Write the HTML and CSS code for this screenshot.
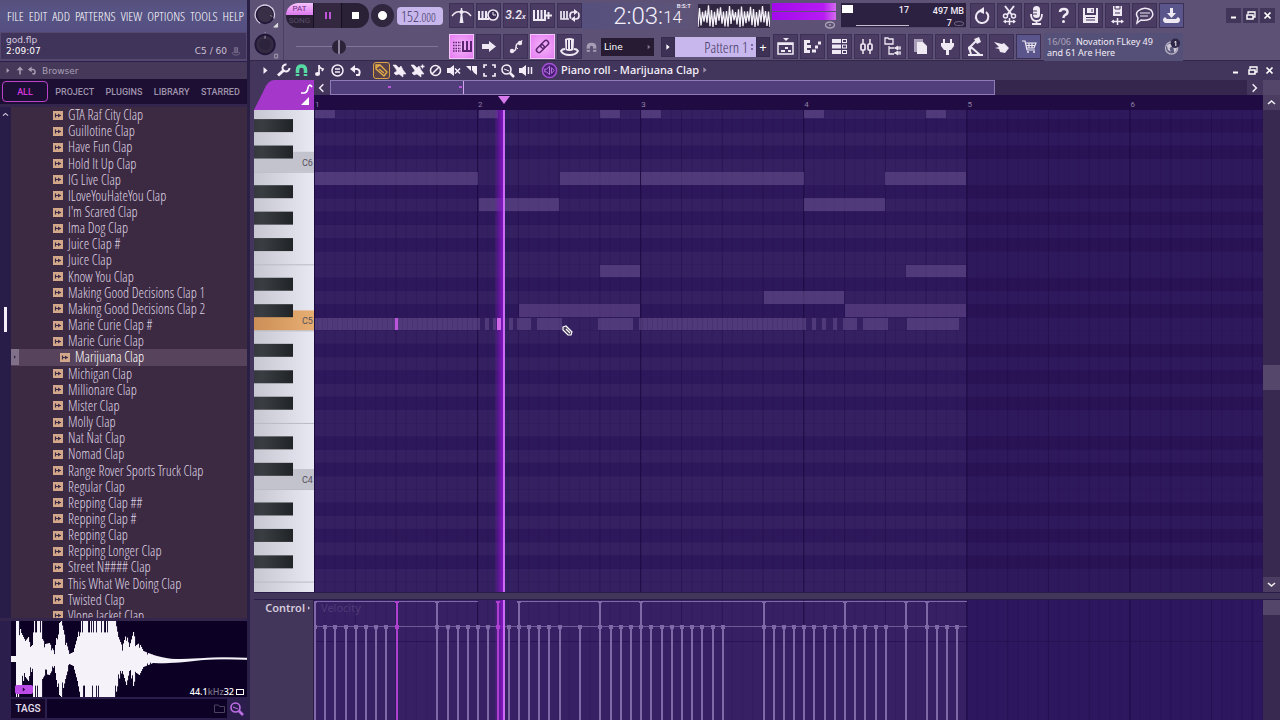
FILE: index.html
```html
<!DOCTYPE html>
<html lang="en">
<head>
<meta charset="utf-8">
<title>god.flp - Piano roll</title>
<link rel="stylesheet" href="styles.css">
</head>
<body>
<svg class="sprite" aria-hidden="true">
  <symbol id="metro" viewBox="0 0 25 25"><path d="M3 13Q7 8 11 9M14 9Q18 8 22 13M12.500 5V20" fill="none" stroke="currentColor" stroke-width="1.500"/><path d="M12.500 7l2 13h-4z" fill="currentColor"/><circle cx="12.500" cy="9" r="2" fill="currentColor"/></symbol>
  <symbol id="wait" viewBox="0 0 25 25"><path d="M3 8v8h10M6.500 8v8M10 8v8" fill="none" stroke="currentColor" stroke-width="2"/><circle cx="17" cy="12" r="5" fill="#3a2b52" stroke="currentColor" stroke-width="1.700"/><path d="M17 9v3h3" fill="none" stroke="currentColor"/></symbol>
  <symbol id="addkeys" viewBox="0 0 25 25"><path d="M4 7v10h11V7M8 7v9M11.500 7v9" fill="none" stroke="currentColor" stroke-width="2"/><path d="M15 12.500h7M18.500 9v7" stroke="currentColor" stroke-width="2"/></symbol>
  <symbol id="loop" viewBox="0 0 25 25"><path d="M4 8v8h8M7 8v8M10 8v8" fill="none" stroke="currentColor" stroke-width="1.700"/><path d="M20 9h-4q-3 0-3 3.500 0 2 1 3M15 16h4q3 0 3-3.500 0-2-1-3" fill="none" stroke="currentColor" stroke-width="1.700"/><path d="M17 6l4 3-4 3zM18 13l-4 3 4 3z" fill="currentColor"/></symbol>
  <symbol id="typing" viewBox="0 0 25 25"><path d="M4 8.500h8M4 11.500h8M4 14.500h8M4 17h8" stroke="currentColor" stroke-width="1.500" stroke-dasharray="1.500 1"/><path d="M14 7v10h8V7M18 7v10" fill="none" stroke="currentColor" stroke-width="2"/></symbol>
  <symbol id="arrow" viewBox="0 0 25 25"><path d="M6 10h7V7l7 5.500-7 5.500v-3H6z" fill="currentColor"/></symbol>
  <symbol id="slide" viewBox="0 0 25 25"><path d="M9 17h1q3 0 3-4t4-4" fill="none" stroke="currentColor" stroke-width="1.500"/><circle cx="9" cy="17" r="2.200" fill="currentColor"/><circle cx="17" cy="9" r="2.200" fill="currentColor"/><path d="M18 9l1-3M13 13l2 2" stroke="currentColor"/></symbol>
  <symbol id="link" viewBox="0 0 25 25"><g transform="rotate(-45 12.500 12.500)" fill="none" stroke="currentColor" stroke-width="1.500"><rect x="5" y="10" width="9" height="5" rx="2.500"/><rect x="11" y="10" width="9" height="5" rx="2.500"/></g></symbol>
  <symbol id="hat" viewBox="0 0 25 25"><path d="M8 5q4.500-2 9 0l-.5 11q-4 2-8 0z" fill="currentColor"/><path d="M8 15q-3 0-4 2 2 4 8.500 4t8.500-4q-1-2-4-2" fill="none" stroke="currentColor" stroke-width="1.800"/><path d="M10.500 6v9M13.500 6v9" stroke="#45345f"/></symbol>
  <symbol id="magnet" viewBox="0 0 25 25"><path d="M5 20v-8q0-6 7.500-6t7.500 6v8h-5v-7q0-2.500-2.500-2.500T10 13v7z" fill="currentColor"/><path d="M5 16h5M15 16h5" stroke="#463658" stroke-width="1.500"/></symbol>
  <symbol id="playlist" viewBox="0 0 25 25"><path d="M10 4h6l-3 3z" fill="currentColor"/><rect x="5" y="9" width="15" height="11" fill="none" stroke="currentColor" stroke-width="1.500"/><path d="M5 10h15M8 17h4M12 14h3M15 17h3" stroke="currentColor" stroke-width="2"/></symbol>
  <symbol id="pianoroll" viewBox="0 0 25 25"><path d="M4 6h6v3H7v2h4v3H7v2h3v3H4z" fill="currentColor"/><path d="M12 17h4M15 13h3M18 9h3" stroke="currentColor" stroke-width="3"/></symbol>
  <symbol id="rack" viewBox="0 0 25 25"><path d="M5 7h9M5 12.500h9M5 18h9" stroke="currentColor" stroke-width="4"/><g fill="none" stroke="currentColor"><rect x="15.500" y="5.500" width="4" height="3"/><rect x="15.500" y="11" width="4" height="3"/><rect x="15.500" y="16.500" width="4" height="3"/></g></symbol>
  <symbol id="mixer" viewBox="0 0 25 25"><path d="M9 5v15M16 5v15" stroke="currentColor" stroke-width="1.500"/><g fill="#41315c" stroke="currentColor" stroke-width="1.700"><rect x="7" y="10" width="4" height="6" rx="1"/><rect x="14" y="10" width="4" height="6" rx="1"/></g></symbol>
  <symbol id="tree" viewBox="0 0 25 25"><path d="M4 4h3l1 1h4v5H4zM8 12v8h5M8 14h5" fill="none" stroke="currentColor" stroke-width="1.300"/><path d="M13 14h7M13 19h7" stroke="currentColor"/><path d="M14 14l3-2v4zM14 19l3-2v4zM19 12v4M19 17v4" fill="currentColor" stroke="currentColor"/></symbol>
  <symbol id="pages" viewBox="0 0 25 25"><path d="M6 5h9v13H6z" fill="#aa9fb9"/><path d="M9 8h6l4 4v8H9z" fill="currentColor"/></symbol>
  <symbol id="plug" viewBox="0 0 25 25"><path d="M8 5h2v4h5V5h2v4h2v3l-3 4h-2v5h-3v-5H9l-3-4V9h2z" fill="currentColor"/></symbol>
  <symbol id="lamp" viewBox="0 0 25 25"><path d="M6 21h15M9 20l-2-6 7-7M9 13l9 8" fill="none" stroke="currentColor" stroke-width="2"/><path d="M12 5l5-2 2 5-4 2z" fill="currentColor"/><circle cx="8" cy="14" r="2" fill="currentColor"/></symbol>
  <symbol id="hand" viewBox="0 0 25 25"><path d="M5 8l8 2 2-1 5 5-4 5-5-1-1-3-4-1 4-1z" fill="currentColor"/></symbol>
  <symbol id="cart" viewBox="0 0 25 25"><path d="M6 7h3l2 9h8M9 9h11l-2 5h-8M10 11.500h9M13 9v5M16 9v5" fill="none" stroke="currentColor" stroke-width="1.200"/><circle cx="12" cy="18" r="1" fill="currentColor"/><circle cx="18" cy="18" r="1" fill="currentColor"/></symbol>
  <symbol id="redo" viewBox="0 0 25 25"><path d="M10 8a6.200 6.200 0 1 0 6 1" fill="none" stroke="currentColor" stroke-width="2"/><path d="M8 8l6-4v7z" fill="currentColor"/></symbol>
  <symbol id="cut" viewBox="0 0 25 25"><path d="M8 3l7 9M17 3l-7 9" stroke="currentColor" stroke-width="2"/><circle cx="8.500" cy="13" r="2" fill="none" stroke="currentColor" stroke-width="1.500"/><circle cx="16.500" cy="13" r="2" fill="none" stroke="currentColor" stroke-width="1.500"/><path d="M7 18.500h11M12.500 15v7" stroke="currentColor" stroke-width="1.500"/><path d="M6 18.500l3-2v4zM19 18.500l-3-2v4z" fill="currentColor"/></symbol>
  <symbol id="mic" viewBox="0 0 25 25"><rect x="9" y="3" width="7" height="12" rx="3.500" fill="currentColor"/><path d="M7 11q0 7 5.500 7T18 11M12.500 18v4M8 21h9" fill="none" stroke="currentColor" stroke-width="1.800"/><path d="M9 8h4M9 11h4" stroke="#45345f"/></symbol>
  <symbol id="help" viewBox="0 0 25 25"><path d="M9 9q0-3 4-3 3.500 0 3.500 3 0 2-2.500 3-1.500 1-1.500 3" fill="none" stroke="currentColor" stroke-width="2.500"/><circle cx="12.500" cy="18.500" r="1.500" fill="currentColor"/></symbol>
  <symbol id="save" viewBox="0 0 25 25"><path d="M5 5h2v7h11V5h2v15H5z" fill="currentColor"/><path d="M9 5h7v5H9z" fill="currentColor"/><path d="M14 6v3M8 14.500h9M8 17h9" stroke="#45345f"/></symbol>
  <symbol id="saveas" viewBox="0 0 25 25"><path d="M8 3h9v10H8z" fill="currentColor"/><path d="M10 3v3h5V3M10 10h5" fill="none" stroke="#45345f"/><path d="M7 18.500h11M12.500 15v7" stroke="currentColor" stroke-width="1.500"/><path d="M6 18.500l3-2v4zM19 18.500l-3-2v4z" fill="currentColor"/></symbol>
  <symbol id="chat" viewBox="0 0 25 25"><path d="M9 17l-4 3 1-5Q3 11 6 8q6-5 13-1 4 5-1 9-4 2-9 1z" fill="none" stroke="currentColor" stroke-width="1.500"/><path d="M8 10h10M8 13h8" stroke="currentColor"/></symbol>
  <symbol id="download" viewBox="0 0 25 25"><path d="M11 5h3v5h3l-4.500 5L8 10h3z" fill="currentColor"/><path d="M6 14l-2 2q0 4 3 4h11q3 0 3-4l-2-2-2 2H8z" fill="currentColor"/></symbol>
  <symbol id="min" viewBox="0 0 15 15"><path d="M5 9.500h5" stroke="currentColor" stroke-width="2"/></symbol>
  <symbol id="restore" viewBox="0 0 15 15"><path d="M5 6V4h7v5h-2" fill="none" stroke="currentColor" stroke-width="1.300"/><path d="M4 7h6v4H4z" fill="none" stroke="currentColor" stroke-width="1.500"/></symbol>
  <symbol id="close" viewBox="0 0 15 15"><path d="M4.500 4.500l6 6M10.500 4.500l-6 6" stroke="currentColor" stroke-width="1.700"/></symbol>
  <symbol id="play" viewBox="0 0 15 15"><path d="M5.500 4l4 3.500-4 3.500z" fill="currentColor"/></symbol>
  <symbol id="wrench" viewBox="0 0 15 15"><path d="M2 12.500l6-5.500" stroke="currentColor" stroke-width="3"/><path d="M13.500 5a3.500 3.500 0 1 1-3-3.500" fill="none" stroke="currentColor" stroke-width="2"/></symbol>
  <symbol id="horseshoe" viewBox="0 0 15 15"><path d="M3.500 13V7q0-4 4-4t4 4v6" fill="none" stroke="currentColor" stroke-width="3.500"/><path d="M1 10.500h5M9 10.500h5" stroke="#43365c"/></symbol>
  <symbol id="note" viewBox="0 0 15 15"><path d="M7 11V2q0 3 4 4-1 2-1 2" fill="none" stroke="currentColor" stroke-width="1.700"/><ellipse cx="5.500" cy="11" rx="2.500" ry="2" fill="currentColor"/></symbol>
  <symbol id="menu" viewBox="0 0 15 15"><circle cx="7.500" cy="7.500" r="5.500" fill="none" stroke="currentColor" stroke-width="1.500"/><path d="M5 6h5M5 9h5" stroke="currentColor" stroke-width="1.300"/></symbol>
  <symbol id="undo" viewBox="0 0 15 15"><path d="M5 6h4q4 1 2 6H8" fill="none" stroke="currentColor" stroke-width="2"/><path d="M2 6l5-4v8z" fill="currentColor"/></symbol>
  <symbol id="pencil" viewBox="0 0 15 15"><path d="M2 2h4l7 7-3 4-8-7zM2 5l4-3M5 6l5 4" fill="none" stroke="currentColor" stroke-width="1.400"/></symbol>
  <symbol id="brush" viewBox="0 0 15 15"><path d="M1 2l3 0 3 3 2-2 2 4 3 4-3 0 0 3-4-3-3 1-2-2 3-2-1-2z" fill="currentColor" stroke="currentColor" stroke-width=".6"/></symbol>
  <symbol id="brush2" viewBox="0 0 15 15"><path d="M1 2l3 0 3 3 2-2 2 4 3 4-3 0 0 3-4-3-3 1-2-2 3-2-1-2z" fill="currentColor" stroke="currentColor" stroke-width=".6"/><path d="M10.500 3.500h4M12.500 1.500v4" stroke="currentColor" stroke-width="1.300"/></symbol>
  <symbol id="no" viewBox="0 0 15 15"><circle cx="7.500" cy="7.500" r="5" fill="none" stroke="currentColor" stroke-width="1.600"/><path d="M4 11l7-7" stroke="currentColor" stroke-width="1.600"/></symbol>
  <symbol id="mute" viewBox="0 0 15 15"><path d="M1 5h3l4-3v11l-4-3H1z" fill="currentColor"/><path d="M9 5.500l5 5M14 5.500l-5 5" stroke="currentColor" stroke-width="1.500"/></symbol>
  <symbol id="slice" viewBox="0 0 15 15"><path d="M2 3h5v5zM8 3h5v9q-3-1-5-5z" fill="currentColor"/></symbol>
  <symbol id="select" viewBox="0 0 15 15"><path d="M2 5V2h3M10 2h3v3M13 10v3h-3M5 13H2v-3" fill="none" stroke="currentColor" stroke-width="1.700"/></symbol>
  <symbol id="zoom" viewBox="0 0 15 15"><circle cx="6.500" cy="6.500" r="4.500" fill="none" stroke="currentColor" stroke-width="1.600"/><path d="M4 6l5 2" stroke="currentColor"/><path d="M10 10l4 4" stroke="currentColor" stroke-width="2.500"/></symbol>
  <symbol id="audition" viewBox="0 0 15 15"><path d="M1 5h3l4-3v11l-4-3H1z" fill="currentColor"/><path d="M10.500 4v7M13.500 4v7" stroke="currentColor" stroke-width="1.500"/></symbol>
  <symbol id="up" viewBox="0 0 15 15"><path d="M7.500 13V5" stroke="currentColor" stroke-width="2"/><path d="M3 7l4.500-5L12 7z" fill="currentColor"/></symbol>
  <symbol id="left" viewBox="0 0 15 15"><path d="M9.500 3.500l-4 4 4 4" fill="none" stroke="currentColor" stroke-width="1.600"/></symbol>
  <symbol id="right" viewBox="0 0 15 15"><path d="M5.500 3.500l4 4-4 4" fill="none" stroke="currentColor" stroke-width="1.600"/></symbol>
  <symbol id="chevup" viewBox="0 0 15 15"><path d="M4 9l3.500-3L11 9" fill="none" stroke="currentColor" stroke-width="1.600"/></symbol>
  <symbol id="chevdown" viewBox="0 0 15 15"><path d="M4 6l3.500 3L11 6" fill="none" stroke="currentColor" stroke-width="1.600"/></symbol>
  <symbol id="sample" viewBox="0 0 10 9"><path d="M0 0h10v9H0z" fill="#d2a78a"/><path d="M2.500 2.500v4M3 4.500h5" stroke="#3c2a48" stroke-width="1.200"/><path d="M5 2.500l3 2-3 2z" fill="#3c2a48"/></symbol>
  <symbol id="folder" viewBox="0 0 15 15"><path d="M2.500 4h4l1 1.500h5v6h-10z" fill="none" stroke="currentColor"/></symbol>
</svg>

<div class="app">
  <aside class="side">
    <nav class="menubar">
      <button>FILE</button><button>EDIT</button><button>ADD</button><button>PATTERNS</button><button>VIEW</button><button>OPTIONS</button><button>TOOLS</button><button>HELP</button>
    </nav>
    <div class="hint">
      <div>god.flp</div>
      <div class="hint-row"><b>2:09:07</b><span>C5 / 60</span><svg class="ic"><use href="#hat"/></svg></div>
    </div>
    <div class="browser-head"><svg><use href="#play"/></svg><svg><use href="#up"/></svg><svg><use href="#undo"/></svg><span>Browser</span></div>
    <div class="tabs"><button class="tab on">ALL</button><button class="tab">PROJECT</button><button class="tab">PLUGINS</button><button class="tab">LIBRARY</button><button class="tab">STARRED</button></div>
    <div class="browser">
      <div class="gutter"><svg class="gutter-up"><use href="#chevup"/></svg><span class="gutter-thumb"></span></div>
      <div class="files">
        <ul>
          <li><svg><use href="#sample"/></svg>GTA Raf City Clap</li>
          <li><svg><use href="#sample"/></svg>Guillotine Clap</li>
          <li><svg><use href="#sample"/></svg>Have Fun Clap</li>
          <li><svg><use href="#sample"/></svg>Hold It Up Clap</li>
          <li><svg><use href="#sample"/></svg>IG Live Clap</li>
          <li><svg><use href="#sample"/></svg>ILoveYouHateYou Clap</li>
          <li><svg><use href="#sample"/></svg>I'm Scared Clap</li>
          <li><svg><use href="#sample"/></svg>Ima Dog Clap</li>
          <li><svg><use href="#sample"/></svg>Juice Clap #</li>
          <li><svg><use href="#sample"/></svg>Juice Clap</li>
          <li><svg><use href="#sample"/></svg>Know You Clap</li>
          <li><svg><use href="#sample"/></svg>Making Good Decisions Clap 1</li>
          <li><svg><use href="#sample"/></svg>Making Good Decisions Clap 2</li>
          <li><svg><use href="#sample"/></svg>Marie Curie Clap #</li>
          <li><svg><use href="#sample"/></svg>Marie Curie Clap</li>
          <li class="sel"><span class="mark"><svg><use href="#play"/></svg></span><svg><use href="#sample"/></svg>Marijuana Clap</li>
          <li><svg><use href="#sample"/></svg>Michigan Clap</li>
          <li><svg><use href="#sample"/></svg>Millionare Clap</li>
          <li><svg><use href="#sample"/></svg>Mister Clap</li>
          <li><svg><use href="#sample"/></svg>Molly Clap</li>
          <li><svg><use href="#sample"/></svg>Nat Nat Clap</li>
          <li><svg><use href="#sample"/></svg>Nomad Clap</li>
          <li><svg><use href="#sample"/></svg>Range Rover Sports Truck Clap</li>
          <li><svg><use href="#sample"/></svg>Regular Clap</li>
          <li><svg><use href="#sample"/></svg>Repping Clap ##</li>
          <li><svg><use href="#sample"/></svg>Repping Clap #</li>
          <li><svg><use href="#sample"/></svg>Repping Clap</li>
          <li><svg><use href="#sample"/></svg>Repping Longer Clap</li>
          <li><svg><use href="#sample"/></svg>Street N#### Clap</li>
          <li><svg><use href="#sample"/></svg>This What We Doing Clap</li>
          <li><svg><use href="#sample"/></svg>Twisted Clap</li>
          <li><svg><use href="#sample"/></svg>Vlone Jacket Clap</li>
        </ul>
      </div>
    </div>
    <div class="preview">
      <svg id="sampleWave" viewBox="0 0 236 76" preserveAspectRatio="none"></svg>
      <button class="preview-play" aria-label="Preview"><svg><use href="#play"/></svg></button>
      <div class="preview-info">44.1<span>kHz</span>32<i></i></div>
    </div>
    <div class="tags"><label for="tag">TAGS</label><div class="tagbox"><input id="tag" type="text"><svg><use href="#folder"/></svg></div><button aria-label="Search"><svg><use href="#zoom"/></svg></button></div>
  </aside>

  <main class="main">
    <header class="toolbar">
      <div class="knobs">
        <svg viewBox="0 0 33 31"><circle cx="15" cy="15" r="9" fill="#393047" stroke="#201638" stroke-width="2"/><path d="M10 24a10 10 0 1 1 14-5" fill="none" stroke="#d8d0e3" stroke-width="1.300"/><path d="M21 16l1 1M28 28v-4l-4 4z" stroke="#ddd" fill="#ddd"/></svg>
        <svg viewBox="0 0 33 31"><circle cx="15" cy="15" r="10" fill="#342b43" stroke="#201638" stroke-width="2"/><circle cx="15" cy="15" r="6" fill="#2c233c"/><path d="M15 6v3M15 2v1M28 29v-4h-3v4z" stroke="#aaa1b4" fill="none"/></svg>
      </div>
      <div class="bars">
        <div class="bar">
          <div class="transport">
            <div class="mode"><button class="pat">PAT</button><button class="song">SONG</button></div>
            <button class="pause" aria-label="Pause"><i></i><i></i></button>
            <button class="stop" aria-label="Stop"><i></i></button>
          </div>
          <button class="rec" aria-label="Record"></button>
          <div class="tempo">152<small>.000</small></div>
          <div class="btns">
            <button aria-label="Metronome"><svg><use href="#metro"/></svg></button><button aria-label="Wait for input"><svg><use href="#wait"/></svg></button><button class="count">3.2<small>x</small></button><button aria-label="Overdub"><svg><use href="#addkeys"/></svg></button><button aria-label="Loop record"><svg><use href="#loop"/></svg></button>
          </div>
          <div class="clock"><span>2:03:</span><span class="clock-end"><sup>B:S:T</sup>14</span></div>
          <svg class="scope" id="scope" viewBox="0 0 72 24" preserveAspectRatio="none"></svg>
          <div class="meter"><i></i><i></i><svg viewBox="0 0 12 8"><ellipse cx="6" cy="4" rx="4.500" ry="3" fill="none" stroke="#aaa2b5" stroke-width="1.300"/><circle cx="6" cy="4" r="1" fill="#aaa2b5"/></svg></div>
          <div class="cpu"><i class="cpu-load"></i><span class="cpu-num">17</span><span class="cpu-mem">497 MB<br>7 <i></i></span></div>
          <div class="btns">
            <button aria-label="Undo"><svg><use href="#redo"/></svg></button><button aria-label="Cut"><svg><use href="#cut"/></svg></button><button aria-label="Record audio"><svg><use href="#mic"/></svg></button><button aria-label="Help"><svg><use href="#help"/></svg></button><button aria-label="Save"><svg><use href="#save"/></svg></button><button aria-label="Save as"><svg><use href="#saveas"/></svg></button><button aria-label="Chat"><svg><use href="#chat"/></svg></button><button class="blue" aria-label="Download"><svg><use href="#download"/></svg></button>
          </div>
          <div class="win"><button aria-label="Minimize"><svg><use href="#min"/></svg></button><button aria-label="Restore"><svg><use href="#restore"/></svg></button><button aria-label="Close"><svg><use href="#close"/></svg></button></div>
        </div>
        <div class="bar">
          <input class="shift" type="range" min="0" max="100" value="28" aria-label="Song position">
          <div class="btns">
            <button class="on" aria-label="Typing keyboard"><svg><use href="#typing"/></svg></button><button aria-label="Step"><svg><use href="#arrow"/></svg></button><button aria-label="Slide"><svg><use href="#slide"/></svg></button><button class="on" aria-label="Link"><svg><use href="#link"/></svg></button><button aria-label="Hat"><svg><use href="#hat"/></svg></button>
          </div>
          <svg class="snap-ic"><use href="#magnet"/></svg>
          <div class="snap"><select aria-label="Snap"><option>Line</option></select><svg><use href="#play"/></svg></div>
          <div class="pattern"><button aria-label="Pattern menu"><svg><use href="#play"/></svg></button><div class="pattern-name">Pattern 1<i></i></div><button>+</button></div>
          <div class="btns">
            <button aria-label="Playlist"><svg><use href="#playlist"/></svg></button><button aria-label="Piano roll"><svg><use href="#pianoroll"/></svg></button><button aria-label="Channel rack"><svg><use href="#rack"/></svg></button><button aria-label="Mixer"><svg><use href="#mixer"/></svg></button><button aria-label="Browser"><svg><use href="#tree"/></svg></button><button aria-label="Projects"><svg><use href="#pages"/></svg></button><button aria-label="Plugins"><svg><use href="#plug"/></svg></button><button aria-label="Tempo tapper"><svg><use href="#lamp"/></svg></button><button aria-label="Touch"><svg><use href="#hand"/></svg></button><button class="blue" aria-label="Shop"><svg><use href="#cart"/></svg></button>
          </div>
          <div class="news"><div><p><time>16/06</time><span>Novation FLkey 49</span></p><p>and 61 Are Here</p></div><svg viewBox="0 0 18 20"><circle cx="8" cy="11" r="6.500" fill="#5b587d" stroke="#b8b2c4" stroke-width="1.300"/><path d="M3 8l4-2 2 3-3 2 1 4-3-2zM10 11l4-1-1 4-2 2z" fill="#cdc6d6"/><circle cx="12" cy="6" r="5" fill="#2f2648"/><path d="M11 5l1.500-1v5" fill="none" stroke="#fff"/></svg></div>
        </div>
      </div>
    </header>

    <section class="roll">
      <div class="titlebar">
        <div class="tools">
          <button aria-label="Menu"><svg><use href="#play"/></svg></button><button aria-label="Tools"><svg><use href="#wrench"/></svg></button><button class="green" aria-label="Snap"><svg><use href="#horseshoe"/></svg></button><button aria-label="Stamp"><svg><use href="#note"/></svg></button><button aria-label="View"><svg><use href="#menu"/></svg></button><button aria-label="Undo"><svg><use href="#undo"/></svg></button>
        </div>
        <div class="tools edit">
          <button class="active" aria-label="Draw"><svg><use href="#pencil"/></svg></button><button aria-label="Paint"><svg><use href="#brush"/></svg></button><button aria-label="Paint sequence"><svg><use href="#brush2"/></svg></button><button aria-label="Delete"><svg><use href="#no"/></svg></button><button aria-label="Mute"><svg><use href="#mute"/></svg></button><button aria-label="Slice"><svg><use href="#slice"/></svg></button><button aria-label="Select"><svg><use href="#select"/></svg></button><button aria-label="Zoom"><svg><use href="#zoom"/></svg></button><button aria-label="Playback"><svg><use href="#audition"/></svg></button>
        </div>
        <svg class="speaker" viewBox="0 0 18 18"><circle cx="9" cy="9" r="7.500" fill="#4a1f76" stroke="#a850d8" stroke-width="1.600"/><path d="M4 7.500h2l3-3v9l-3-3H4zM11 6l3 3-3 3z" fill="none" stroke="#c07be8"/></svg>
        <h1>Piano roll - Marijuana Clap</h1><svg class="dim"><use href="#play"/></svg>
        <div class="win flat"><button aria-label="Minimize"><svg><use href="#min"/></svg></button><button aria-label="Restore"><svg><use href="#restore"/></svg></button><button aria-label="Close"><svg><use href="#close"/></svg></button></div>
      </div>
      <div class="body">
        <div class="corner"><svg viewBox="0 0 60 30"><path d="M0 30L10 10Q14 0 20 0h40v30z" fill="#a538cb"/><path d="M47 13h3q3 0 4-5t4-1" fill="none" stroke="#fff" stroke-width="1.700"/><path d="M47 25h8v-8z" fill="#fff"/></svg></div>
        <div class="overview"><button aria-label="Scroll left"><svg><use href="#left"/></svg></button><div class="track"><div class="range"><svg id="mini"></svg></div></div><button aria-label="Scroll right"><svg><use href="#right"/></svg></button></div>
        <div class="ov-end"></div>
        <div class="ruler"><svg id="ruler"></svg></div>
        <button class="vbtn" aria-label="Scroll up"><svg><use href="#chevup"/></svg></button>
        <svg class="keys" id="keys"></svg>
        <svg class="grid" id="grid"></svg>
        <div class="vscroll"><span></span><button aria-label="Scroll down"><svg><use href="#chevdown"/></svg></button></div>
        <div class="split"></div>
        <div class="control"><span>Control</span><svg><use href="#play"/></svg></div>
        <svg class="grid" id="velocity"></svg>
        <div class="vscroll low"><b></b></div>
      </div>
    </section>
  </main>
</div>
<script src="draw.js"></script>
</body>
</html>
```

FILE: styles.css
```css
* { box-sizing: border-box; }
body { margin: 0; background: #382b50; color: #d6cde0; font: 11px/14px "Noto Sans", "Open Sans", sans-serif; }
button, input, select { font: inherit; color: inherit; background: none; border: 0; padding: 0; margin: 0; }
button { display: block; }
svg { display: block; }
.sprite { position: absolute; width: 0; height: 0; }
.app { display: grid; grid-template-columns: 250px minmax(0, 1fr); height: 100vh; overflow: hidden; }
.menubar, .files ul, .tempo, .pattern-name { font-family: "Open Sans Condensed Light", "Noto Sans Condensed", "Roboto Condensed", "DejaVu Sans Condensed", sans-serif; }

/* sidebar */
.side { display: flex; flex-direction: column; min-height: 0; background: #2b1e4c; border-right: 3px solid #2a1f45; }
.menubar { display: flex; align-items: center; justify-content: space-between; height: 32px; padding: 0 3px 0 7px; background: linear-gradient(#57507c, #575486 40%, #564f81); color: #fff; font-size: 13px; }
.hint { height: 29px; margin-bottom: 1px; padding: 1px 4px 0 5px; background: #41345a; border: 1px solid #554870; border-width: 1px 1px 2px 1px; font: 9px/11px "DejaVu Sans", sans-serif; }
.hint div { height: 11px; line-height: 13px; }
.hint-row { display: flex; gap: 3px; color: #c9c0d4; }
.hint-row b { margin-right: auto; color: #fff; font-weight: 400; }
.hint-row svg { width: 12px; height: 12px; opacity: .4; }
.browser-head { display: flex; align-items: center; height: 17px; padding-left: 2px; background: #453859; color: #a99fb5; font: 9px "DejaVu Sans", sans-serif; }
.browser-head svg { width: 12px; height: 11px; }
.browser-head span { margin-left: 4px; }
.tabs { display: flex; gap: 3px; height: 25px; padding: 2px 3px 2px 2px; background: #1d0f33; }
.tab { flex: 1 1 auto; color: #9f93ac; font: 500 9px Roboto, sans-serif; }
.tab.on { flex: 0 0 46px; color: #d535dd; border: 1px solid #bb43c7; border-radius: 4px; }
.browser { display: flex; flex: 1; min-height: 0; padding: 3px 0; background: #34254c; }
.gutter { display: flex; flex-direction: column; align-items: center; width: 11px; background: #281c48; }
.gutter-up { width: 11px; height: 15px; }
.gutter-thumb { width: 3px; height: 25px; margin-top: 185px; background: #f4effa; }
.files { flex: 1; overflow: hidden; background: #3c2a43; }
.files ul { display: flex; flex-direction: column; height: calc(100% + 6px); margin: 0; padding: 0; list-style: none; font-size: 14px; line-height: 16px; color: #dfd3e2; }
.files li { display: flex; flex: 1; align-items: center; gap: 5px; min-height: 0; padding-left: 42px; white-space: nowrap; }
.files li > svg { width: 10px; height: 9px; }
.files .sel { padding-left: 0; background: #57445c; color: #fff; }
.mark { width: 8px; height: 16px; margin-right: 36px; background: #81708a; color: #3d2c4a; }
.mark svg { width: 8px; height: 16px; }
.preview { position: relative; height: 76px; margin-left: 11px; background: #0c0024; }
.preview > svg { width: 100%; height: 100%; }
.preview-play { position: absolute; left: 4px; bottom: 3px; width: 18px; height: 9px; border-radius: 2px; background: #bd4bea; color: #1a0530; }
.preview-play svg { width: 18px; height: 9px; }
.preview-info { position: absolute; right: 3px; bottom: 0; display: flex; align-items: center; color: #fff; font: 500 9px/10px "Noto Sans", sans-serif; }
.preview-info span { color: #7d748b; }
.preview-info i { width: 8px; height: 6px; margin-left: 2px; border: 1px solid #fff; }
.tags { display: flex; height: 23px; padding: 2px 0 2px 11px; }
.tags label { width: 34px; background: #140629; color: #e8e0f0; font: 500 10px/19px Roboto, sans-serif; text-align: center; }
.tagbox { display: flex; flex: 1; align-items: center; margin: 0 2px; background: #0d0125; color: #4e4261; }
.tagbox input { flex: 1; min-width: 0; }
.tagbox svg, .tags button svg { width: 15px; height: 15px; }
.tags button { width: 18px; color: #bd6fe5; }

/* toolbar */
.main { display: flex; flex-direction: column; min-width: 0; }
.toolbar { display: flex; height: 61px; background: #5e5176; border-bottom: 1px solid #33274a; }
.knobs { width: 34px; border-right: 1px solid #4b3e61; }
.knobs svg { width: 33px; height: 30px; }
.bars { flex: 1; min-width: 0; }
.bar { display: flex; align-items: center; height: 31px; padding-right: 5px; }
.transport { display: flex; flex: none; width: 83px; height: 25px; margin: 0 2px; overflow: hidden; border-radius: 12px; background: #2a2137; }
.mode { width: 27px; font: 8px/12px Roboto, sans-serif; }
.mode button { width: 27px; height: 12px; }
.pat { background: linear-gradient(#f6c3fa, #dd78ef); color: #6b2c80; }
.song { color: #594d65; }
.pause, .stop { display: flex; flex: 1; align-items: center; justify-content: center; gap: 2px; }
.pause { border: solid #171022; border-width: 0 1px; background: #33283f; }
.pause i { width: 2px; height: 7px; background: #c052db; }
.stop i { width: 7px; height: 7px; background: #fff; }
.rec { flex: none; width: 23px; height: 23px; border-radius: 50%; background: radial-gradient(circle, #fff 0 4px, #30263e 5px); }
.tempo { flex: none; width: 46px; height: 18px; margin: 0 6px 0 3px; padding-left: 4px; border-radius: 4px; background: #c7b7ec; color: #41345f; font-size: 15px; line-height: 18px; }
.tempo small { font-size: 12px; }
.btns { display: flex; flex: none; gap: 2px; }
.btns button { width: 25px; height: 25px; border: 1px solid #3d3057; background: #4a3b63; color: #efe9f4; }
.btns svg { width: 25px; height: 25px; margin: -1px; }
.btns .on { border-color: #f5c6fb; background: radial-gradient(#f3b5fa, #e57bf2); color: #5a2470; }
.btns .blue { background: #5a568b; }
.btns .count { font: italic 500 12px/22px Roboto, sans-serif; }
.btns .count small { font-size: 8px; }
.clock { display: flex; flex: none; justify-content: flex-end; align-items: center; width: 113px; height: 26px; margin-right: 3px; padding-right: 13px; background: linear-gradient(90deg, #56507e, #5e5478); color: #f4effb; font: 300 24px/26px Roboto, sans-serif; }
.clock-end { position: relative; padding-top: 3px; font-size: 17px; line-height: 23px; }
.clock sup { position: absolute; right: -9px; top: 0; font: 500 6px/6px Roboto, sans-serif; }
.scope { flex: none; width: 72px; height: 24px; background: #302641; }
.meter { display: flex; flex: none; flex-direction: column; gap: 1px; width: 64px; height: 26px; margin: 0 5px 0 2px; }
.meter i { height: 8px; background: linear-gradient(90deg, #a30aeb, #b71af3 80%, #d46aee); }
.meter svg { align-self: flex-end; width: 12px; height: 8px; }
.cpu { display: flex; flex: none; gap: 3px; width: 125px; height: 25px; padding: 2px 2px 0 1px; background: #2c2140; border-bottom: 1px solid #55476a; color: #f1ebf6; font: 500 9px/11px "Roboto", sans-serif; }
.cpu-load { width: 11px; height: 8px; background: #fff; }
.cpu-num { flex: 1; height: 21px; border-bottom: 1px solid #c7bdce; text-align: right; }
.cpu-mem { width: 52px; text-align: right; line-height: 12px; }
.cpu-mem i { display: inline-block; width: 10px; height: 5px; border: 1px solid #6e6280; border-radius: 50%; }
.cpu + .btns { margin-left: 4px; }
.win { display: flex; flex: none; gap: 2px; margin-left: auto; }
.win button { width: 15px; height: 15px; background: #42355a; color: #fff; }
.win svg { width: 15px; height: 15px; }
.flat button { background: none; }
.shift { flex: none; width: 142px; margin: 0 11px 0 12px; appearance: none; height: 14px; background: linear-gradient(#837596, #837596) center / 100% 1px no-repeat; }
.shift::-webkit-slider-thumb { appearance: none; width: 14px; height: 14px; border-radius: 50%; background: linear-gradient(90deg, transparent 6px, #8e839c 6px 8px, transparent 8px), #2c2338; }
.snap-ic { flex: none; width: 19px; height: 16px; color: #a79db5; }
.snap { position: relative; flex: none; width: 53px; height: 18px; background: #261b33; color: #fff; }
.snap select { width: 100%; height: 18px; padding-left: 3px; appearance: none; font: 9px "DejaVu Sans", sans-serif; }
.snap svg { position: absolute; right: 0; top: 3px; width: 10px; height: 12px; color: #867991; }
.pattern { display: flex; flex: none; width: 109px; height: 20px; margin: 0 3px 0 7px; }
.pattern button { width: 14px; background: #3e3156; border: 1px solid #372b4e; color: #fff; font-size: 13px; line-height: 16px; }
.pattern svg { width: 12px; height: 18px; }
.pattern-name { display: flex; flex: 1; align-items: center; justify-content: flex-end; gap: 3px; padding-right: 3px; background: #c7b7ec; color: #41345f; font-size: 15px; line-height: 20px; white-space: nowrap; }
.pattern-name i { width: 2px; height: 6px; border: dotted #7c6ba0; border-width: 2px 0; }
.news { display: flex; flex: none; align-items: center; justify-content: space-between; width: 139px; height: 28px; margin-left: 3px; padding: 0 2px 0 3px; background: #555078; color: #f1ecf7; font: 9px/11px "Noto Sans", sans-serif; white-space: nowrap; }
.news p { display: flex; gap: 5px; margin: 0; }
.news time { color: #aaa2b9; }
.news svg { width: 17px; height: 20px; }

/* piano roll */
.roll { display: flex; flex: 1; flex-direction: column; min-height: 0; padding-left: 4px; background: #43355c; }
.titlebar { display: flex; flex: none; align-items: center; height: 19px; padding: 0 3px 1px; background: #43365c; }
.tools { display: flex; gap: 3px; margin-left: 1px; color: #f3eef7; }
.tools button { width: 15px; height: 15px; }
.tools svg { width: 15px; height: 15px; }
.tools .green { color: #57d9a3; }
.edit { margin-left: 11px; }
.edit .active { width: 17px; height: 17px; margin: -1px; border: 1px solid #d9a345; border-radius: 3px; background: #58414a; color: #e5ae4a; }
.speaker { width: 17px; height: 17px; margin: 0 3px 0 8px; }
.titlebar h1 { margin: 0; color: #f6f1fa; font: 500 11px/16px "Noto Sans", sans-serif; white-space: nowrap; }
.dim { width: 12px; height: 12px; color: #9f93ad; }
.body { display: grid; flex: 1; grid-template: 15px 15px minmax(0, 1fr) 8px 120px / 60px minmax(0, 1fr) 17px; min-height: 0; }
.corner { grid-row: span 2; }
.corner svg { width: 60px; height: 30px; }
.overview { display: flex; background: #35264d; color: #f2edf7; }
.overview button { width: 16px; background: #43355b; }
.overview svg { width: 15px; height: 14px; }
.track { flex: 1; }
.range { width: 72.500%; height: 15px; border: 1px solid #8f79b7; background: #513f7b; }
.range svg { width: 100%; height: 13px; }
.ov-end { background: #54456b; }
.ruler { background: #200b43; }
.ruler svg { width: 100%; height: 15px; overflow: visible; }
.vbtn, .vscroll button { width: 17px; height: 15px; background: #4b3c62; color: #eee; }
.vbtn svg, .vscroll button svg { width: 17px; height: 15px; }
.keys { width: 60px; height: 100%; background: #dddde6; }
.grid { width: 100%; height: 100%; background: #2b165a; }
.vscroll { position: relative; background: #37294f; }
.vscroll span { position: absolute; left: 0; right: 0; top: 53%; height: 25px; background: #55466c; }
.vscroll button { position: absolute; left: 0; bottom: 0; }
.low b { display: block; height: 15px; background: #54456b; }
.split { grid-column: 1 / -1; background: #43365b; border: solid #2a1b48; border-width: 1px 0; }
.control { display: flex; align-items: flex-start; justify-content: flex-end; border-right: 1px solid #2a1b48; background: #43365b; color: #d4cbdc; font: 600 11px/16px "Noto Sans", "Open Sans", sans-serif; }
.control svg { width: 8px; height: 16px; }
```

FILE: draw.js
```js
const BAR = 163.1, STEP = BAR / 16, ROW = 13.22, END = 652.5;
const rect = (x, y, w, h, fill, extra = '') => `<rect x="${x}" y="${y}" width="${w}" height="${h}" fill="${fill}" ${extra}/>`;
const put = (id, markup) => { document.getElementById(id).innerHTML = markup; };

// Semitones are counted from C5.
const C5_TOP = 207.4;
const isBlack = n => [1, 3, 6, 8, 10].includes(((n % 12) + 12) % 12);
const rowTop = n => C5_TOP - n * ROW;

// Keyboard
let k = '<defs><linearGradient id="kb"><stop stop-color="#35383e"/><stop offset=".2" stop-color="#3a3e42"/><stop offset="1" stop-color="#202427"/></linearGradient><linearGradient id="kw"><stop stop-color="#c7c7d2"/><stop offset="1" stop-color="#e9e9f4"/></linearGradient><linearGradient id="kc"><stop stop-color="#cc8f57"/><stop offset="1" stop-color="#e7ae72"/></linearGradient></defs>';
k += rect(0, 0, 60, 2000, 'url(#kw)');
for (let n = -120; n < 24; n++) {
  const semi = ((n % 12) + 12) % 12;
  if (semi === 0) {
    k += rect(0, rowTop(n) - 7, 60, 20, n === 0 ? 'url(#kc)' : '#c3c3ce');
  }
  if (semi === 0 || semi === 5) k += rect(0, rowTop(n) + 13, 60, 1, '#bbbbc6');
}
for (let n = -120; n < 24; n++) {
  if (isBlack(n)) k += rect(0, rowTop(n), 39, 13, 'url(#kb)');
}
[['C6', 12], ['C5', 0], ['C4', -12]].forEach(([t, n]) => {
  k += `<text x="48" y="${rowTop(n) + 7}" font-family="Roboto" font-size="9" fill="#55505c">${t}</text>`;
});
put('keys', k);

// Grid lines shared by the note area and the velocity lane
const lines = () => {
  let s = '';
  for (let i = 0; i < 400; i++) {
    const o = i % 16 === 0 ? 0.75 : i % 4 === 0 ? 0.35 : 0.12;
    s += rect((i * STEP).toFixed(1), 0, 1, 2000, '#170638', `opacity="${o}"`);
  }
  return s;
};
const play = rect(181, 0, 9, 2000, 'url(#glow)') + rect(189, 0, 2, 2000, '#cb6df2');
const glow = '<defs><linearGradient id="glow"><stop stop-color="#7d17b8" stop-opacity=".15"/><stop offset="1" stop-color="#8b12cf"/></linearGradient></defs>';

let g = glow;
for (let n = -120; n < 24; n++) {
  g += rect(0, rowTop(n), END, ROW, isBlack(n) ? '#2e185c' : '#352061');
  g += rect(END, rowTop(n), 4000, ROW, isBlack(n) ? '#291355' : '#2f195d');
}
g += lines();
const notes = [
  [0, 8, [[1, 21], [165, 184], [286, 306], [327, 347], [490, 510], [612, 632]]],
  [62, 13, [[1, 164], [246, 326], [327, 490], [571, 652]]],
  [88, 13, [[165, 245], [490, 571]]],
  [155, 12, [[286, 326], [592, 652]]],
  [181, 13, [[450, 530]]],
  [194, 13, [[205, 326], [531, 652]]],
  [208, 12, [[1, 166], [171, 175], [179, 182], [195, 199], [203, 217], [223, 248], [284, 319], [325, 492], [498, 502], [508, 512], [519, 523], [529, 543], [549, 574], [593, 645]]],
];
notes.forEach(([y, h, spans]) => spans.forEach(([a, b]) => { g += rect(a, y, b - a, h, '#6c5391', 'opacity=".52"'); }));
for (let x = 3; x < 166; x += 5) g += rect(x, 208, 1, 12, '#2e185c', 'opacity=".2"');
for (let x = 328; x < 492; x += 5) g += rect(x, 208, 1, 12, '#2e185c', 'opacity=".2"');
g += play + rect(81, 208, 3, 12, '#bd55dc') + rect(183, 208, 4, 12, '#cf68e8');
g += '<g transform="translate(248 215)" fill="#4a3a60" stroke="#fff" stroke-width="1.200"><path d="M1 2l3-1 6 6-1 3-3 0-5-5zM4 4l4 4"/></g>';
put('grid', g);

// Velocity lane
const tall = [0, 8, 12, 18, 20, 28, 32, 44, 52, 58, 60];
const gaps = [9, 10, 11, 25, 27, 41, 42, 43, 57, 59];
let v = rect(0, 0, END, 200, '#372064') + rect(END, 0, 4000, 200, '#2d175f') + lines();
v += rect(0, 41, 4000, 1, '#25104f', 'opacity=".7"');
v += '<text x="7" y="12" font-family="Noto Sans" font-size="11" fill="#513a77">Velocity</text>';
v += rect(1, 1, 163, 1, '#8069a7') + rect(204, 1, 449, 1, '#8069a7') + rect(1, 26, 652, 1, '#705995');
v += play;
for (let i = 0; i < 64; i++) {
  if (gaps.includes(i)) continue;
  const x = Math.round(i * STEP);
  const c = i === 8 || i === 18 ? '#ad41cf' : '#8069a7';
  const y = tall.includes(i) ? 1 : 26;
  v += rect(x, y, 2, 200, c) + rect(x - 1, 25, 4, 4, c);
  if (y === 1) v += rect(x - 1, 1, 4, 2, c);
}
put('velocity', v);

// Bar numbers and playhead marker
let r = '';
for (let i = 0; i < 6; i++) r += `<text x="${i * BAR + 1}" y="12" font-family="Roboto" font-size="8" fill="#8f80a5">${i + 1}</text>`;
r += '<path d="M184 1h12l-6 8z" fill="#d67bee"/>';
put('ruler', r);
put('mini', rect(57, 5, 3, 2, '#bd55dc') + rect(128, 5, 3, 2, '#bd55dc') + rect(132, 0, 1, 13, '#d0a6ee'));

// Oscilloscope and sample preview
let o = '';
for (let i = 0; i < 49; i++) {
  const a = 1 + Math.abs(Math.sin(i * 2.7)) * 7, b = 16 + Math.abs(Math.cos(i * 1.9)) * 7;
  o += `${i ? 'L' : 'M'}${i * 1.5} ${i % 2 ? a : b}`;
}
put('scope', `<path d="${o}" fill="none" stroke="#f4f0f8" stroke-width="1.300"/>`);

const env = [[0, 3], [4, 3], [5, 38], [7, 38], [10, 26], [14, 18], [17, 22], [19, 12], [21, 14], [22, 38], [30, 38], [31, 20], [34, 15], [38, 16], [43, 7], [47, 35], [50, 38], [54, 20], [58, 5], [62, 7], [66, 22], [69, 38], [104, 38], [107, 22], [111, 12], [115, 26], [118, 12], [122, 27], [125, 14], [128, 16], [132, 8], [142, 4], [160, 2], [190, 1], [236, 1]];
const level = x => {
  const i = env.findIndex(p => p[0] >= x);
  if (i < 1) return env[0][1];
  const [x0, a] = env[i - 1], [x1, b] = env[i];
  return a + (b - a) * (x - x0) / (x1 - x0);
};
let w = '';
for (let x = 0; x < 236; x++) {
  const e = level(x);
  const noise = s => { const t = Math.abs(Math.sin(x * s) * 437.58) % 1; return e > 4 && t > 0.8 ? 0.7 : 1; };
  const mid = x > 140 ? 38 + 3 * Math.sin((x - 142) / 16) * Math.exp(-(x - 140) / 50) : 38;
  const top = e * noise(1.7), low = e * noise(2.3);
  w += rect(x, mid - top, 1.1, top + low, '#f5f2fa');
}
put('sampleWave', w);
```
